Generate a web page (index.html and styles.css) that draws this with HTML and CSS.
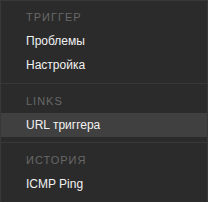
FILE: index.html
```html
<!DOCTYPE html>
<html lang="ru">
<head>
  <meta charset="UTF-8">
  <title>Меню триггера</title>
  <link rel="stylesheet" href="styles.css">
</head>
<body>

  <ul class="menu-popup">
    <li class="menu-section">
      <h3>Триггер</h3>
      <a href="#" class="menu-item">Проблемы</a>
      <a href="#" class="menu-item">Настройка</a>
    </li>
    <li class="menu-section">
      <h3>Links</h3>
      <a href="#" class="menu-item selected">URL триггера</a>
    </li>
    <li class="menu-section">
      <h3>История</h3>
      <a href="#" class="menu-item">ICMP Ping</a>
    </li>
  </ul>

</body>
</html>
```

FILE: styles.css
```css
body {
  margin: 0;
  background: #2b2b2b;
  font-family: "Liberation Sans", Arial, sans-serif;
}

.menu-popup {
  list-style: none;
  margin: 0;
  padding: 4px 0 5px;
  min-height: 192px;
  border: 1px solid #383838;
  background: #2b2b2b;
}

.menu-section + .menu-section {
  margin-top: 5px;
  padding-top: 5px;
  border-top: 1px solid #383838;
}

.menu-section:first-child {
  padding-bottom: 1px;
}

.menu-popup h3 {
  margin: 0;
  padding: 0 15px 0 25px;
  line-height: 24px;
  font-size: 11px;
  font-weight: normal;
  letter-spacing: 1px;
  text-transform: uppercase;
  color: #686868;
}

.menu-item {
  display: block;
  padding: 0 15px 0 25px;
  line-height: 24px;
  font-size: 12px;
  color: #f2f2f2;
  text-decoration: none;
}

.menu-item.selected {
  background: #404040;
}
```
